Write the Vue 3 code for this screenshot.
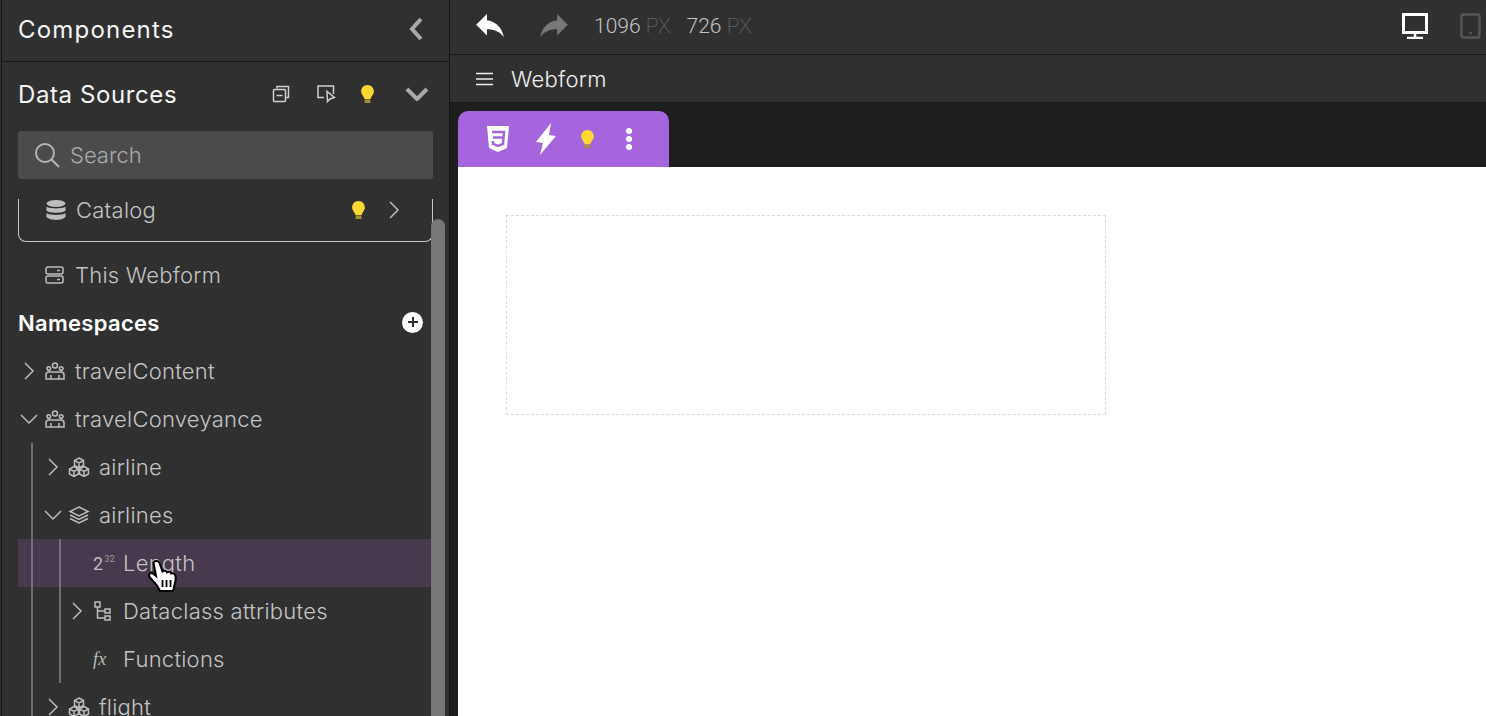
<script setup>
const bulbPath = 'M6 0C2.7 0 0 2.7 0 6c0 2.4 1.2 3.6 2.2 5 .6.9.9 1.6 1 2.5h5.6c.1-.9.4-1.6 1-2.5C10.8 9.6 12 8.4 12 6c0-3.3-2.7-6-6-6z'
</script>

<template>
  <div class="shell">
    <aside class="sidebar">
      <div class="panel-head">
        <h2 class="wide">Components</h2>
        <svg class="collapse" viewBox="0 0 14 24" width="14" height="24"><path d="M12 2 3 12l9 10" /></svg>
      </div>
      <div class="sources">
        <div class="sources-head">
          <h2>Data Sources</h2>
          <div class="head-icons">
            <svg class="ic-a" viewBox="0 0 18 18" width="18" height="18">
              <path d="M5 3.5V1.500h11.500v11H14" />
              <rect x="1.5" y="4.5" width="12" height="12" rx="1" />
              <path d="M4.500 10.500h6" />
            </svg>
            <svg class="ic-b" viewBox="0 0 20 20" width="20" height="20">
              <path d="M8 13.500H2V2h15.500v8" />
              <path d="M11 7.500l.5 10 2.500-2.500 4.500-1.500z" />
            </svg>
            <svg class="bulb ic-c" viewBox="0 0 12 17" width="13" height="18">
              <path :d="bulbPath" fill="#fdd835" />
              <rect x="3.3" y="14" width="5.4" height="3" fill="#a8912f" />
            </svg>
            <svg class="expand" viewBox="0 0 24 14" width="24" height="14"><path d="M2 2l10 10L22 2" /></svg>
          </div>
        </div>
        <div class="search">
          <svg viewBox="0 0 26 26" width="26" height="26"><circle cx="11" cy="11" r="9" /><path d="M17.500 17.500 25 25" /></svg>
          <span>Search</span>
        </div>
      </div>

      <div class="tree">
        <div class="catalog">
          <svg class="catalog-db" viewBox="0 0 20 20" width="20" height="20">
            <ellipse cx="10" cy="3.5" rx="9.5" ry="3.5" />
            <path d="M.5 6.500c2 2.500 17 2.500 19 0v4c-2 3-17 3-19 0zM.5 13c2 2.500 17 2.500 19 0v3.500c-2 4.500-17 4.500-19 0z" />
          </svg>
          <span class="label">Catalog</span>
          <svg class="bulb catalog-bulb" viewBox="0 0 12 17" width="13" height="18">
            <path :d="bulbPath" fill="#fdd835" />
            <rect x="3.3" y="14" width="5.4" height="3" fill="#a8912f" />
          </svg>
          <svg class="chev" viewBox="0 0 12 20" width="12" height="20"><path d="M2 2l8 8-8 8" /></svg>
        </div>

        <div class="row top webform">
          <span class="twisty"></span>
          <svg class="ic" viewBox="0 0 20 18" width="20" height="18">
            <rect x="1" y="1" width="17" height="7" rx="2" />
            <rect x="1" y="10" width="17" height="7" rx="2" />
            <path d="M12 4.500h3M12 13.500h3" />
          </svg>
          <span class="label">This Webform</span>
        </div>

        <div class="ns-head">
          <strong>Namespaces</strong>
          <span class="add">
            <svg viewBox="0 0 12 12" width="12" height="12"><path d="M6 1v10M1 6h10" /></svg>
          </span>
        </div>

        <div class="row top">
          <svg class="twisty-ic" viewBox="0 0 12 20" width="12" height="20"><path d="M2 2l8 8-8 8" /></svg>
          <svg class="ic" viewBox="0 0 20 18" width="20" height="18">
            <circle cx="10" cy="3.5" r="2.5" /><circle cx="3.8" cy="6.5" r="1.8" /><circle cx="16.2" cy="6.5" r="1.8" />
            <path d="M1 17v-4c0-2 1-3 3-3h12c2 0 3 1 3 3v4zM6 17v-4M14 17v-4" />
          </svg>
          <span class="label">travelContent</span>
        </div>

        <div class="row top">
          <svg class="twisty-ic down" viewBox="0 0 20 12" width="20" height="12"><path d="M2 2l8 8 8-8" /></svg>
          <svg class="ic" viewBox="0 0 20 18" width="20" height="18">
            <circle cx="10" cy="3.5" r="2.5" /><circle cx="3.8" cy="6.5" r="1.8" /><circle cx="16.2" cy="6.5" r="1.8" />
            <path d="M1 17v-4c0-2 1-3 3-3h12c2 0 3 1 3 3v4zM6 17v-4M14 17v-4" />
          </svg>
          <span class="label">travelConveyance</span>
        </div>

        <div class="group">
          <div class="row">
            <svg class="twisty-ic" viewBox="0 0 12 20" width="12" height="20"><path d="M2 2l8 8-8 8" /></svg>
            <svg class="ic" viewBox="0 0 22 20" width="22" height="20">
              <path d="M11 1l4.500 2.500v5L11 11 6.500 8.500v-5zM6.500 3.500 11 6l4.500-2.500M11 6v5" />
              <path d="M6 9.500l4.500 2.500v5L6 19.500 1.500 17v-5zM1.500 12 6 14.500l4.500-2.500M6 14.500v5" />
              <path d="M16 9.500l4.500 2.500v5L16 19.500 11.500 17v-5zM11.500 12l4.500 2.500 4.500-2.500M16 14.500v5" />
            </svg>
            <span class="label">airline</span>
          </div>
          <div class="row">
            <svg class="twisty-ic down" viewBox="0 0 20 12" width="20" height="12"><path d="M2 2l8 8 8-8" /></svg>
            <svg class="ic" viewBox="0 0 20 18" width="20" height="18">
              <path d="M10 1l9 4.500-9 4.500-9-4.500zM1 9l9 4.500L19 9M1 12.500 10 17l9-4.500" />
            </svg>
            <span class="label">airlines</span>
          </div>

          <div class="group inner">
            <div class="row active">
              <span class="twisty"></span>
              <span class="pow">2<sup>32</sup></span>
              <span class="label">Length</span>
              <svg class="hand" viewBox="0 0 29 33" width="29" height="33">
                <path d="M5.500 3.500C7 1.500 10.500 1.500 11.500 4l3 8.500c1.500-1 3.500-1 4.500.8 1.500-1 3.500-.6 4.300 1.200 1.500-.7 3.700 0 4.200 2.500.4 3 0 6-1 9l-1.500 6H12l-3-5.500L1.500 18c-1.500-2.500.8-5 3.500-3.500l3 2.500z" />
                <path class="bars" d="M14.500 21v7M18.500 21v7M22.500 21v7" />
              </svg>
            </div>
            <div class="row">
              <svg class="twisty-ic" viewBox="0 0 12 20" width="12" height="20"><path d="M2 2l8 8-8 8" /></svg>
              <svg class="ic" viewBox="0 0 18 20" width="18" height="20">
                <rect x="1" y="1" width="5" height="5" />
                <rect x="11" y="8" width="5" height="4" />
                <rect x="11" y="15" width="5" height="4" />
                <path d="M3.500 6v11H11M3.500 10H11" />
              </svg>
              <span class="label">Dataclass attributes</span>
            </div>
            <div class="row">
              <span class="twisty"></span>
              <span class="fx">fx</span>
              <span class="label">Functions</span>
            </div>
          </div>

          <div class="row">
            <svg class="twisty-ic" viewBox="0 0 12 20" width="12" height="20"><path d="M2 2l8 8-8 8" /></svg>
            <svg class="ic" viewBox="0 0 22 20" width="22" height="20">
              <path d="M11 1l4.500 2.500v5L11 11 6.500 8.500v-5zM6.500 3.500 11 6l4.500-2.500M11 6v5" />
              <path d="M6 9.500l4.500 2.500v5L6 19.500 1.500 17v-5zM1.500 12 6 14.500l4.500-2.500M6 14.500v5" />
              <path d="M16 9.500l4.500 2.500v5L16 19.500 11.500 17v-5zM11.500 12l4.500 2.500 4.500-2.500M16 14.500v5" />
            </svg>
            <span class="label">flight</span>
          </div>
        </div>
      </div>
      <div class="scrollbar"></div>
    </aside>

    <main class="main">
      <div class="toolbar">
        <svg class="undo" viewBox="3 5 18 15" width="28" height="23"><path d="M10 9V5l-7 7 7 7v-4.100c5 0 8.500 1.600 11 5.100-1-5-4-10-11-11z" /></svg>
        <svg class="redo" viewBox="3 5 18 15" width="28" height="23"><path d="M14 9V5l7 7-7 7v-4.100c-5 0-8.500 1.600-11 5.100 1-5 4-10 11-11z" /></svg>
        <span class="size first">1096 <em>PX</em></span>
        <span class="size">726 <em>PX</em></span>
        <div class="devices">
          <svg viewBox="0 0 26 26" width="26" height="26">
            <rect x="1.500" y="1.500" width="23" height="18" fill="none" stroke="#fff" stroke-width="3" />
            <path d="M13 20v4M5 25h16" fill="none" stroke="#fff" stroke-width="2.500" />
          </svg>
          <svg class="tablet" viewBox="0 0 21 26" width="21" height="26">
            <rect x="1.5" y="1.5" width="18" height="23" rx="2" fill="none" stroke="#555" stroke-width="2.5" />
            <circle cx="10.5" cy="20" r="1.5" fill="#555" />
          </svg>
        </div>
      </div>
      <div class="titlebar">
        <svg viewBox="0 0 17 14" width="17" height="14"><path d="M0 1.500h17M0 7h17M0 12.500h17" /></svg>
        <span>Webform</span>
      </div>
      <div class="canvas">
        <div class="tab">
          <svg class="css3" viewBox="0 0 24 28" width="24" height="28">
            <path d="M1 1h22l-2 22-9 4-9-4z" fill="#fff" />
            <path d="M6 7h12l-1 12-5 2-5-2-.2-3M7 12.500h10" fill="none" stroke="#a566dd" stroke-width="2.5" />
          </svg>
          <svg class="bolt" viewBox="0 0 20 32" width="20" height="32"><path d="M15 0 0 19l7 1-3 12 16-19-7-1z" fill="#fff" /></svg>
          <svg class="bulb tab-bulb" viewBox="0 0 12 17" width="13" height="18">
            <path :d="bulbPath" fill="#fdd835" />
            <rect x="3.3" y="14" width="5.4" height="3" fill="#a8912f" />
          </svg>
          <svg class="dots" viewBox="0 0 6 22" width="6" height="22">
            <circle cx="3" cy="3" r="3" fill="#fff" /><circle cx="3" cy="11" r="3" fill="#fff" /><circle cx="3" cy="19" r="3" fill="#fff" />
          </svg>
        </div>
        <div class="page">
          <div class="dropzone"></div>
        </div>
      </div>
    </main>
  </div>
</template>

<style>
html, body {
  margin: 0;
  background: #1e1e1e;
  overflow: hidden;
}
</style>

<style scoped>
.shell {
  display: flex;
  height: 716px;
  width: 1486px;
  overflow: hidden;
  background: #303030;
  padding-left: 1px;
  box-sizing: border-box;
  font-family: Inter, "Open Sans", sans-serif;
}
.sidebar {
  position: relative;
  width: 449px;
  flex: none;
  box-sizing: border-box;
  border-left: 1px solid #161616;
  border-right: 1px solid #161616;
  display: flex;
  flex-direction: column;
  overflow: hidden;
}
h2 {
  margin: 0;
  font-size: 24px;
  font-weight: 400;
  color: #f5f5f5;
  letter-spacing: 0.6px;
}
h2.wide {
  letter-spacing: 1.2px;
}
.panel-head {
  height: 62px;
  flex: none;
  box-sizing: border-box;
  padding: 0 26px 3px 16px;
  display: flex;
  align-items: center;
  justify-content: space-between;
  border-bottom: 1px solid #161616;
}
.collapse path, .expand path {
  fill: none;
  stroke: #a9a9a9;
  stroke-width: 4;
}
.sources {
  padding: 0 16px;
}
.sources-head {
  height: 64px;
  margin-bottom: 5px;
  display: flex;
  align-items: center;
  justify-content: space-between;
}
.head-icons {
  display: flex;
  align-items: center;
  margin-right: 4px;
}
.ic-a, .ic-b {
  fill: none;
  stroke: #d0d0d0;
  stroke-width: 1.5;
}
.ic-a { margin-right: 26px; }
.ic-b { margin-right: 25px; }
.ic-c { margin-right: 31px; }
.search {
  height: 48px;
  border-radius: 3px;
  background: #4b4b4b;
  display: flex;
  align-items: center;
  gap: 10px;
  padding-left: 16px;
  color: #aaa;
  font-size: 22px;
  font-weight: 300;
}
.search svg {
  fill: none;
  stroke: #b5b5b5;
  stroke-width: 2;
}
.tree {
  flex: 1;
  margin: 20px 16px 0;
  overflow: hidden;
  color: #c4c4c4;
  font-size: 22px;
  font-weight: 300;
  letter-spacing: 0.25px;
}
/* the card is scrolled partly out of the tree, its top edge stays hidden */
.catalog {
  height: 55px;
  margin-top: -12px;
  box-sizing: border-box;
  border: 1px solid #c9c9c9;
  border-top: none;
  border-radius: 0 0 8px 8px;
  display: flex;
  align-items: center;
  padding: 0 32px 8px 27px;
}
.catalog .label {
  flex: 1;
  margin-left: 10px;
  line-height: 22px;
}
.catalog-db {
  fill: #bdbdbd;
}
.catalog-bulb {
  margin-right: 23px;
}
.chev, .twisty-ic {
  fill: none;
  stroke: #bdbdbd;
  stroke-width: 1.5;
  flex: none;
}
.row {
  height: 48px;
  display: flex;
  align-items: center;
  position: relative;
}
.row.top {
  margin-left: 4px;
}
.row.webform {
  margin-top: 9px;
}
.twisty {
  width: 16px;
  height: 1px;
  flex: none;
}
.twisty-ic {
  width: 16px;
  margin-left: -1px;
  margin-right: 1px;
}
.twisty-ic.down {
  width: 20px;
  margin: 0 -1px 0 -3px;
}
.ic {
  fill: none;
  stroke: #bdbdbd;
  stroke-width: 1.5;
  flex: none;
  margin-left: 6px;
  width: 22px;
}
.label {
  margin-left: 9px;
  white-space: nowrap;
}
.ns-head {
  height: 48px;
  display: flex;
  align-items: center;
  justify-content: space-between;
  padding-right: 10px;
}
.ns-head strong {
  color: #fff;
  font-size: 22px;
  font-weight: 600;
  letter-spacing: 0.3px;
}
.add {
  width: 21px;
  height: 21px;
  margin-top: -2px;
  border-radius: 50%;
  background: #fff;
  display: flex;
  align-items: center;
  justify-content: center;
}
.add svg {
  stroke: #303030;
  stroke-width: 2;
}
.group {
  margin-left: 13px;
  border-left: 2px solid #6f6f6f;
  padding-left: 13px;
}
.group.inner {
  padding-left: 9px;
}
.row.active {
  background: rgba(165, 102, 200, 0.2);
  margin-left: -52px;
  padding-left: 52px;
}
.pow {
  margin-left: 6px;
  width: 22px;
  flex: none;
  box-sizing: border-box;
  padding-left: 1px;
  font: 18px Roboto, sans-serif;
  color: #bdbdbd;
  white-space: nowrap;
}
.pow sup {
  font-size: 9px;
  color: #9a9a9a;
  vertical-align: 8px;
  line-height: 0;
  margin-left: 1px;
}
.fx {
  margin-left: 6px;
  width: 22px;
  flex: none;
  box-sizing: border-box;
  padding-left: 1px;
  font: italic 18px "Liberation Serif", serif;
  color: #bdbdbd;
}
.hand {
  position: absolute;
  left: 130px;
  top: 20px;
  z-index: 2;
}
.hand path {
  fill: #fff;
  stroke: #000;
  stroke-width: 2;
}
.hand .bars {
  fill: none;
  stroke-width: 1.8;
}
.scrollbar {
  position: absolute;
  left: 429px;
  top: 219px;
  bottom: 0;
  width: 14px;
  border-radius: 7px 7px 0 0;
  background: #777;
}
.main {
  flex: 1;
  display: flex;
  flex-direction: column;
  min-width: 0;
  background: #1e1e1e;
}
.toolbar {
  height: 55px;
  flex: none;
  box-sizing: border-box;
  border-bottom: 1px solid #181818;
  background: #303030;
  display: flex;
  align-items: center;
  padding: 0 5px 3px 26px;
}
.undo { fill: #fff; }
.redo { fill: #777; margin-left: 36px; }
.size {
  font: 300 21px Roboto, sans-serif;
  color: #c4c4c4;
}
.size em {
  font-style: normal;
  font-weight: 100;
  color: #777;
}
.size.first { margin: 0 16px 0 26px; }
.devices {
  margin-left: auto;
  display: flex;
  gap: 32px;
  align-items: center;
}
.titlebar {
  height: 48px;
  flex: none;
  box-sizing: border-box;
  border-bottom: 1px solid #181818;
  background: #303030;
  display: flex;
  align-items: center;
  gap: 18px;
  padding-left: 26px;
  color: #f0f0f0;
  font-size: 22px;
  font-weight: 300;
  letter-spacing: 0.3px;
}
.titlebar svg {
  stroke: #eee;
  stroke-width: 1.7;
}
.canvas {
  flex: 1;
  padding: 8px 0 0 8px;
  display: flex;
  flex-direction: column;
  min-height: 0;
}
.tab {
  width: 211px;
  height: 56px;
  flex: none;
  background: #a566dd;
  border-radius: 10px 10px 0 0;
  display: flex;
  align-items: center;
}
.css3 { margin-left: 28px; }
.bolt { margin-left: 26px; }
.tab-bulb { margin-left: 25px; }
.dots { margin-left: 32px; }
.page {
  flex: 1;
  background: #fff;
  padding: 48px;
}
.dropzone {
  width: 600px;
  height: 200px;
  box-sizing: border-box;
  border: 1px dashed #dcdcdc;
}
</style>
